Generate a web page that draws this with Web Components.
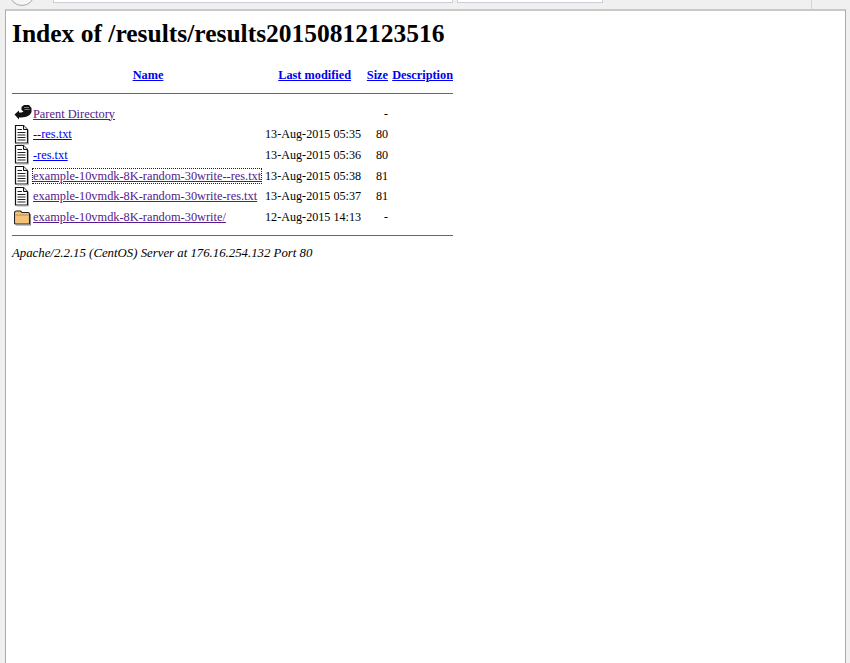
<!DOCTYPE html>
<html>
<head>
<meta charset="utf-8">
<title>Index of /results/results20150812123516</title>
<style>
  html, body { margin: 0; height: 100%; overflow: hidden; background: #fff; }
</style>
</head>
<body>
<browser-frame>
  <dir-index heading="Index of /results/results20150812123516" address="Apache/2.2.15 (CentOS) Server at 176.16.254.132 Port 80">
    <dir-row icon="back" name="Parent Directory" size="-" visited></dir-row>
    <dir-row icon="text" name="--res.txt" modified="13-Aug-2015 05:35" size="80"></dir-row>
    <dir-row icon="text" name="-res.txt" modified="13-Aug-2015 05:36" size="80"></dir-row>
    <dir-row icon="text" name="example-10vmdk-8K-random-30write--res.txt" modified="13-Aug-2015 05:38" size="81" visited focused></dir-row>
    <dir-row icon="text" name="example-10vmdk-8K-random-30write-res.txt" modified="13-Aug-2015 05:37" size="81" visited></dir-row>
    <dir-row icon="folder" name="example-10vmdk-8K-random-30write/" modified="12-Aug-2015 14:13" size="-" visited></dir-row>
  </dir-index>
</browser-frame>
<script>
class BrowserFrame extends HTMLElement {
  connectedCallback() {
    this.attachShadow({ mode: 'open' });
    this.shadowRoot.innerHTML = `
      <style>
        :host {
          display: flex;
          flex-direction: column;
          height: 663px;
          background: #f0f0f0;
          padding: 0 4px 0 5px;
          box-sizing: border-box;
        }
        .toolbar {
          height: 9px;
          margin: 0 -4px 0 -5px;
          display: flex;
          overflow: hidden;
          background: #f0f0f0;
          flex: none;
        }
        .back {
          width: 26px;
          height: 26px;
          margin: -20px 0 0 9px;
          border: 1px solid #a9a9a9;
          border-radius: 50%;
          background: #f5f5f5;
          box-sizing: border-box;
          flex: none;
        }
        .field {
          height: 2px;
          background: #fff;
          border: 1px solid #c9ced4;
          border-top: 0;
          flex: none;
        }
        .url { width: 398px; margin-left: 18px; }
        .search { width: 144px; margin-left: 4px; }
        .tick { width: 1px; height: 9px; background: #d4d4d4; margin-left: 208px; flex: none; }
        .page {
          flex: 1;
          background: #fff;
          border-top: 2px solid #c8c8c8;
          border-left: 1px solid #ababab;
          border-right: 1px solid #ababab;
          overflow: hidden;
        }
      </style>
      <div class="toolbar">
        <div class="back"></div>
        <div class="field url"></div>
        <div class="field search"></div>
        <div class="tick"></div>
      </div>
      <div class="page"><slot></slot></div>
    `;
  }
}
customElements.define('browser-frame', BrowserFrame);

class DirIndex extends HTMLElement {
  connectedCallback() {
    this.attachShadow({ mode: 'open' });
    this.shadowRoot.innerHTML = `
      <style>
        :host {
          display: block;
          padding: 0 6px;
          font: 12.3px/16px "Liberation Serif", "Times New Roman", serif;
          color: #000;
        }
        h1 {
          font: bold 25.5px/27px "Liberation Serif", "Times New Roman", serif;
          margin: 9px 0 12px;
        }
        .wrap { width: 441px; }
        .head {
          display: grid;
          grid-template-columns: 230px 88px 37px 65px;
          align-items: end;
          font-weight: bold;
          height: 34px;
          padding: 0 0 10px 21px;
          box-sizing: border-box;
        }
        .head a { color: #00e; }
        .head .c { text-align: center; }
        .head .r { text-align: right; }
        hr {
          height: 1px;
          margin: 0;
          border: 0;
          background: #666;
        }
        .rows { padding: 9px 0 8px 0; }
        address { font-style: italic; font-size: 12.8px; margin-top: 9px; }
      </style>
      <h1>${this.getAttribute('heading')}</h1>
      <div class="wrap">
        <div class="head">
          <span class="c"><a href="#">Name</a></span>
          <span class="r"><a href="#">Last modified</a></span>
          <span class="r"><a href="#">Size</a></span>
          <span class="r"><a href="#">Description</a></span>
        </div>
        <hr>
        <div class="rows"><slot></slot></div>
        <hr>
      </div>
      <address>${this.getAttribute('address')}</address>
    `;
  }
}
customElements.define('dir-index', DirIndex);

const ICONS = {
  back: `<svg width="19" height="22" viewBox="0 0 19 22">
    <path d="M0.5 12.5 L5 8.5 V10.5 C7 10.5 8.5 10.5 9.5 9.5 L7.5 8 V5 L10 3 H15 L17.5 6 V10 C16 14.5 11 15.5 5 15.5 V17.5 Z" fill="#111"/>
    <path d="M10 5.5 H15 M10.5 7.5 H15.5" stroke="#999" stroke-width="0.8"/>
  </svg>`,
  text: `<svg width="19" height="22" viewBox="0 0 19 22">
    <path d="M1.5 2.5 H9.5 L13.5 6.5 V20 H1.5 Z" fill="#fff" stroke="#111" stroke-width="1.2"/>
    <path d="M9.5 2.5 V6.5 H13.5" fill="#ddd" stroke="#111" stroke-width="1"/>
    <path d="M3.5 6.5 H8 M3.5 9.5 H11.5 M3.5 12 H11.5 M3.5 14.5 H11.5 M3.5 17 H11.5" stroke="#222" stroke-width="1.2"/>
    <path d="M14.5 7 V21 H3" fill="none" stroke="#aaa" stroke-width="1"/>
  </svg>`,
  folder: `<svg width="19" height="22" viewBox="0 0 19 22">
    <path d="M1.5 19 Q0.5 19 0.5 18 V8 Q0.5 6 2.5 6 H6.5 L8 7.5 H14 Q15.5 7.5 15.5 9 V19 Z" fill="#f5c27a" stroke="#222" stroke-width="1.1"/>
    <path d="M1.5 10 H15" stroke="#b98c4a" stroke-width="1"/>
    <path d="M16.5 9 V20 H2" fill="none" stroke="#888" stroke-width="1.1"/>
  </svg>`
};

class DirRow extends HTMLElement {
  connectedCallback() {
    const name = this.getAttribute('name');
    const visited = this.hasAttribute('visited');
    const focused = this.hasAttribute('focused');
    this.attachShadow({ mode: 'open' });
    this.shadowRoot.innerHTML = `
      <style>
        :host {
          display: grid;
          grid-template-columns: 19px 232px 123px;
          height: 20.7px;
          align-items: center;
          white-space: nowrap;
          margin-left: 2px;
        }
        svg { display: block; margin-top: -1px; }
        a { color: ${visited ? '#551a8b' : '#00e'}; font-size: 12.36px; }
        a.focused { outline: 1px dotted #222; outline-offset: 0; }
        .when { display: grid; grid-template-columns: 1fr 27px; font-size: 12.15px; }
        .size { text-align: right; }
      </style>
      <span>${ICONS[this.getAttribute('icon')]}</span>
      <span><a href="#" class="${focused ? 'focused' : ''}">${name}</a></span>
      <span class="when">
        <span>${this.getAttribute('modified') || ''}</span>
        <span class="size">${this.getAttribute('size')}</span>
      </span>
    `;
  }
}
customElements.define('dir-row', DirRow);
</script>
</body>
</html>
